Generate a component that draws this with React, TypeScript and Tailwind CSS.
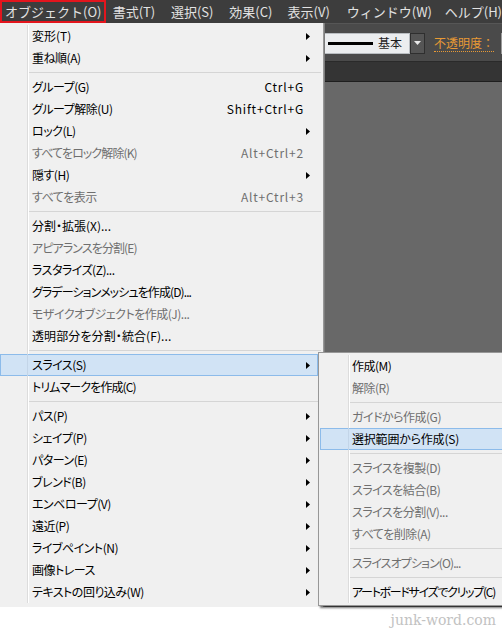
import React from "react";

type Row =
  | { t: "i"; label: string; sc?: string; arrow?: boolean; dis?: boolean; hi?: boolean; tr?: string }
  | { t: "s" };

const mainRows: Row[] = [
  { t: "i", label: "変形(T)", arrow: true, tr: "tracking-[0px]" },
  { t: "i", label: "重ね順(A)", arrow: true },
  { t: "s" },
  { t: "i", label: "グループ(G)", sc: "Ctrl+G" },
  { t: "i", label: "グループ解除(U)", sc: "Shift+Ctrl+G" },
  { t: "i", label: "ロック(L)", arrow: true },
  { t: "i", label: "すべてをロック解除(K)", sc: "Alt+Ctrl+2", dis: true, tr: "tracking-[-0.9px]" },
  { t: "i", label: "隠す(H)", arrow: true },
  { t: "i", label: "すべてを表示", sc: "Alt+Ctrl+3", dis: true },
  { t: "s" },
  { t: "i", label: "分割・拡張(X)...", tr: "tracking-[0px]" },
  { t: "i", label: "アピアランスを分割(E)", dis: true, tr: "tracking-[-0.9px]" },
  { t: "i", label: "ラスタライズ(Z)..." },
  { t: "i", label: "グラデーションメッシュを作成(D)...", tr: "tracking-[-0.9px]" },
  { t: "i", label: "モザイクオブジェクトを作成(J)...", dis: true },
  { t: "i", label: "透明部分を分割・統合(F)...", tr: "tracking-[0.1px]" },
  { t: "s" },
  { t: "i", label: "スライス(S)", arrow: true, hi: true },
  { t: "i", label: "トリムマークを作成(C)", tr: "tracking-[-0.9px]" },
  { t: "s" },
  { t: "i", label: "パス(P)", arrow: true },
  { t: "i", label: "シェイプ(P)", arrow: true },
  { t: "i", label: "パターン(E)", arrow: true },
  { t: "i", label: "ブレンド(B)", arrow: true },
  { t: "i", label: "エンベロープ(V)", arrow: true },
  { t: "i", label: "遠近(P)", arrow: true },
  { t: "i", label: "ライブペイント(N)", arrow: true },
  { t: "i", label: "画像トレース", arrow: true },
  { t: "i", label: "テキストの回り込み(W)", arrow: true },
];

const subRows: Row[] = [
  { t: "i", label: "作成(M)" },
  { t: "i", label: "解除(R)", dis: true },
  { t: "s" },
  { t: "i", label: "ガイドから作成(G)", dis: true },
  { t: "i", label: "選択範囲から作成(S)", hi: true, tr: "tracking-[-0.2px]" },
  { t: "s" },
  { t: "i", label: "スライスを複製(D)", dis: true },
  { t: "i", label: "スライスを結合(B)", dis: true },
  { t: "i", label: "スライスを分割(V)...", dis: true },
  { t: "i", label: "すべてを削除(A)", dis: true },
  { t: "s" },
  { t: "i", label: "スライスオプション(O)...", dis: true, tr: "tracking-[-0.9px]" },
  { t: "s" },
  { t: "i", label: "アートボードサイズでクリップ(C)", tr: "tracking-[-1.3px]" },
];

function Arrow() {
  return (
    <svg width="4" height="7" viewBox="0 0 4 7" className="block">
      <path d="M0 0L4 3.5L0 7Z" fill="#000" />
    </svg>
  );
}

function MainMenuRow({ r }: { r: Row }) {
  if (r.t === "s") {
    return (
      <div className="flex h-[7px]">
        <div className="w-[28px] shrink-0 border-r border-r-[#dcdcdc] shadow-[1px_0_0_#ffffff]" />
        <div className="flex-1 pl-[1px] pt-[3px]">
          <div className="h-px bg-[#d5d5d5] mr-[-3px]" />
        </div>
      </div>
    );
  }
  return (
    <div
      className={
        "flex h-[22px] items-center " +
        (r.hi ? "bg-[#d1e3f5] ring-1 ring-inset ring-[#8cbbea]" : "")
      }
    >
      <div
        className={
          "w-[28px] h-full shrink-0 border-r " +
          (r.hi ? "border-r-[#c3d5e8]" : "border-r-[#dcdcdc] shadow-[1px_0_0_#ffffff]")
        }
      />
      <div
        className={
          "flex-1 pl-[4px] leading-[22px] whitespace-nowrap " +
          (r.tr ?? "tracking-[-0.5px]") +
          " " +
          (r.dis ? "text-[#6f6f6f]" : "text-black")
        }
      >
        {r.label}
      </div>
      {r.sc && (
        <div
          className={
            "whitespace-nowrap leading-[22px] tracking-[0.8px] mr-[-1px] " +
            (r.dis ? "text-[#6f6f6f]" : "text-black")
          }
        >
          {r.sc}
        </div>
      )}
      <div className="w-[15px] shrink-0 pl-[3px] flex items-center">{r.arrow && <Arrow />}</div>
    </div>
  );
}

function SubMenuRow({ r }: { r: Row }) {
  if (r.t === "s") {
    return (
      <div className="flex h-[7px]">
        <div className="w-[29px] shrink-0 border-r border-r-[#dcdcdc] shadow-[1px_0_0_#ffffff]" />
        <div className="flex-1 pl-[1px] pt-[3px]">
          <div className="h-px bg-[#d5d5d5]" />
        </div>
      </div>
    );
  }
  return (
    <div
      className={
        "flex h-[22px] items-center " +
        (r.hi ? "bg-[#d1e3f5] ring-1 ring-inset ring-[#8cbbea]" : "")
      }
    >
      <div
        className={
          "w-[29px] h-full shrink-0 border-r " +
          (r.hi ? "border-r-[#c3d5e8]" : "border-r-[#dcdcdc] shadow-[1px_0_0_#ffffff]")
        }
      />
      <div
        className={
          "flex-1 pl-[3px] leading-[22px] whitespace-nowrap " +
          (r.tr ?? "tracking-[-0.5px]") +
          " " +
          (r.dis ? "text-[#6f6f6f]" : "text-black")
        }
      >
        {r.label}
      </div>
    </div>
  );
}

export default function App() {
  return (
    <div className="relative w-[502px] h-[634px] overflow-hidden bg-white font-['Noto_Sans_CJK_JP','Noto_Sans',sans-serif]">
      {/* application window */}
      <div className="h-[607px] flex flex-col bg-[#686868]">
        {/* menubar */}
        <div className="h-[23px] shrink-0 flex bg-[#3d3d3d] text-[13px] text-[#e2e2e2] whitespace-nowrap">
          <div className="w-[109px] h-[23px] border-2 border-[#e3151d] pl-[3px] flex items-center">オブジェクト(O)</div>
          <div className="w-[59px] pl-[7px] flex items-center">書式(T)</div>
          <div className="w-[60px] pl-[8px] flex items-center">選択(S)</div>
          <div className="w-[60px] pl-[8px] flex items-center">効果(C)</div>
          <div className="w-[61px] pl-[8px] flex items-center">表示(V)</div>
          <div className="w-[101px] pl-[8px] flex items-center">ウィンドウ(W)</div>
          <div className="flex-1 pl-[8px] flex items-center">ヘルプ(H)</div>
        </div>
        {/* control bar */}
        <div className="h-[38px] shrink-0 bg-[#4a4a4a] border-t border-t-[#565656] flex items-center pl-[318px] pt-[1px]">
          <div className="w-[92px] h-[21px] shrink-0 bg-[#ebedef] border border-[#b9bdc1] flex items-center pl-[9px]">
            <div className="w-[45px] h-[3px] bg-black" />
            <div className="ml-[5px] text-[12px] leading-none text-[#1c1c1c]">基本</div>
          </div>
          <div className="w-[15px] h-[21px] shrink-0 bg-[#555555] border border-[#2f2f2f] flex items-center justify-center">
            <svg width="7" height="4" viewBox="0 0 7 4" className="block">
              <path d="M0 0H7L3.5 4Z" fill="#e8e8e8" />
            </svg>
          </div>
          <div className="ml-[9px] text-[12px] leading-[16px] text-[#e99a35] border-b border-dotted border-b-[#e99a35] whitespace-nowrap">
            不透明度：
          </div>
          <div className="ml-[7px] w-[20px] h-[21px] shrink-0 bg-[#d8d8d8] border border-[#9a9a9a]" />
        </div>
        <div className="h-px shrink-0 bg-[#2a2a2a]" />
        <div className="h-[19px] shrink-0 bg-[#343434]" />
        <div className="h-px shrink-0 bg-[#1e1e1e]" />
        <div className="flex-1 bg-[#686868]" />
      </div>

      {/* watermark */}
      <div className="h-[27px] flex items-center justify-end pr-[6px] pb-[1px]">
        <span className="font-['DejaVu_Serif',serif] text-[14px] leading-none text-[#c2c2c2]">junk-word.com</span>
      </div>

      {/* main dropdown menu */}
      <div className="absolute left-0 top-[23px] w-[324px] h-[584px] bg-[#f0f0f0] border-r border-r-[#979797] shadow-[1px_0_0_#7c7c7c] pt-[2px] pr-[5px] text-[12px] [font-feature-settings:'palt']">
        {mainRows.map((r, i) => (
          <MainMenuRow key={i} r={r} />
        ))}
      </div>

      {/* submenu */}
      <div className="absolute left-[318px] top-[352px] w-[200px] h-[254px] bg-[#f0f0f0] border border-[#979797] shadow-[2px_2px_2px_rgba(0,0,0,0.55)] pt-[2px] px-[1px] text-[12px] [font-feature-settings:'palt']">
        {subRows.map((r, i) => (
          <SubMenuRow key={i} r={r} />
        ))}
      </div>
    </div>
  );
}
